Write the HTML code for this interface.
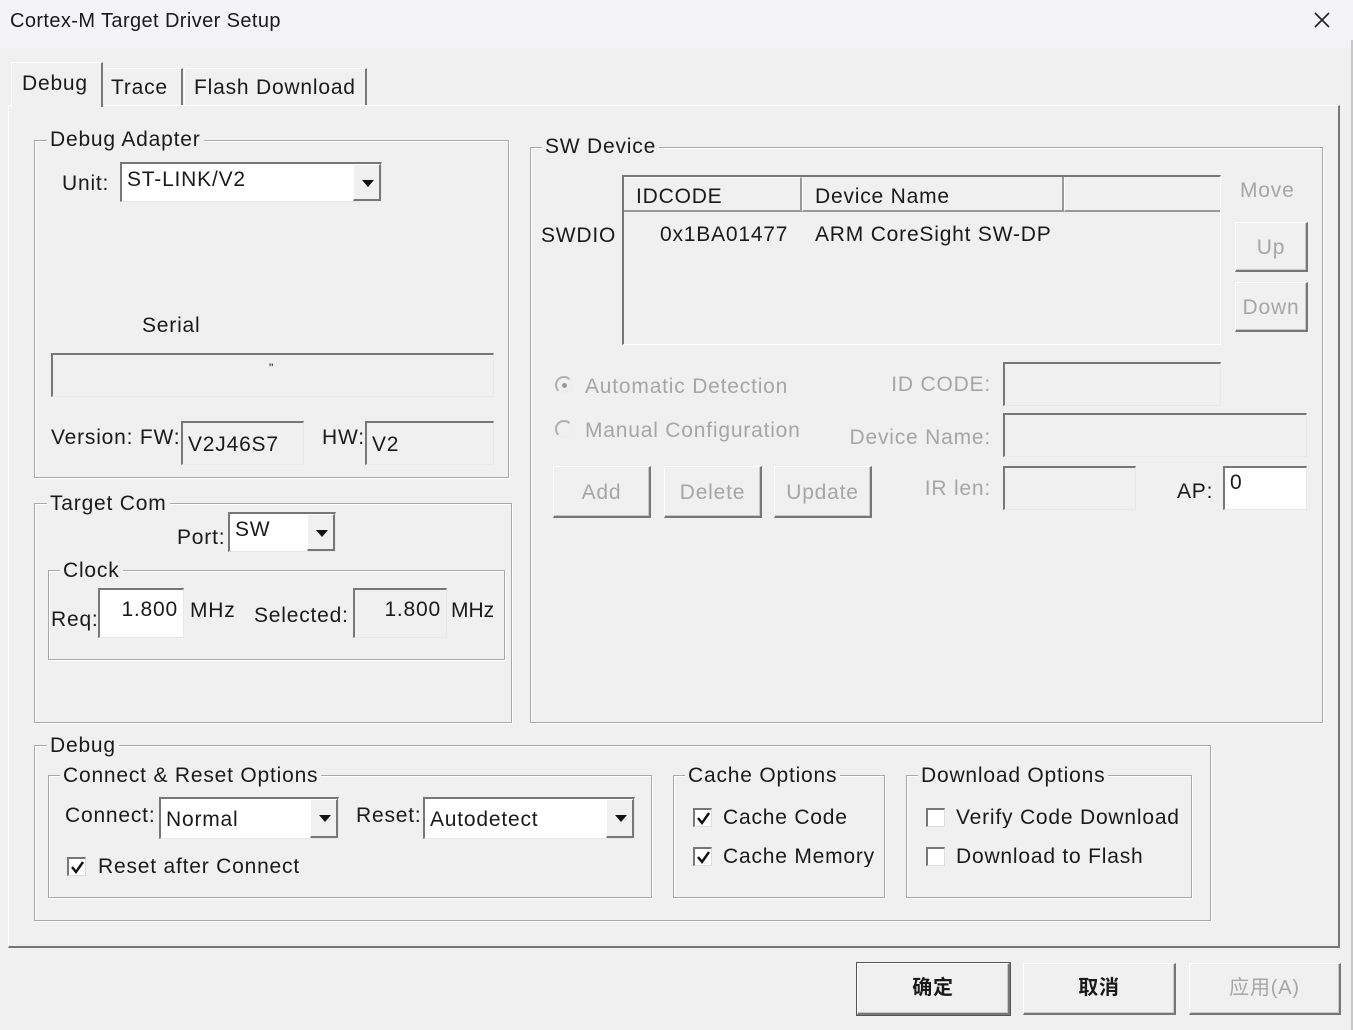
<!DOCTYPE html>
<html><head><meta charset="utf-8"><style>
*{box-sizing:border-box;margin:0;padding:0}
body{width:1353px;height:1030px;background:#f0f0f0;position:relative;overflow:hidden;font-family:"Liberation Sans","Noto Sans CJK SC",sans-serif;font-size:21px;color:#1a1a1a;letter-spacing:0.8px}
.a{position:absolute;white-space:nowrap;line-height:1}
.g{position:absolute;border:1px solid #a8a8a8;box-shadow:inset 1px 1px #fff,1px 1px #fff}
.gl{position:absolute;background:#f0f0f0;padding:0 3px;line-height:1;white-space:nowrap}
.e{position:absolute;background:#fff;border-top:2px solid #777;border-left:2px solid #777;border-bottom:1px solid #e8e8e8;border-right:1px solid #e8e8e8;padding:3px 5px;line-height:1.1;white-space:nowrap}
.ro{background:#f0f0f0}
.cb{position:absolute;background:#fff;border-top:2px solid #777;border-left:2px solid #777;border-bottom:1px solid #e8e8e8;border-right:1px solid #e8e8e8;padding:4px 5px;line-height:1.1}
.cb .ar{position:absolute;right:0;top:0;bottom:0;width:28px;background:#f0f0f0;border-left:1px solid #fff;border-top:1px solid #fff;border-right:2px solid #777;border-bottom:2px solid #777}
.cb .ar:after{content:"";position:absolute;left:8px;top:15px;border-left:6px solid transparent;border-right:6px solid transparent;border-top:7px solid #111}
.b{position:absolute;background:#f0f0f0;border-top:1px solid #fff;border-left:1px solid #fff;border-right:2px solid #777;border-bottom:2px solid #777;box-shadow:inset -1px -1px #c8c8c8;text-align:center;line-height:1}
.d{color:#a6a6a6}
.ck{position:absolute;width:19px;height:19px;background:#fff;border-top:2px solid #777;border-left:2px solid #777;border-bottom:1px solid #ddd;border-right:1px solid #ddd}
.ck svg{position:absolute;left:1px;top:1px}
.rd{position:absolute;width:18px;height:18px;border-radius:50%;border:2px solid #b0b0b0;border-right-color:#eee;border-bottom-color:#eee}
</style></head><body>
<div style="position:absolute;left:0;top:0;width:1353px;height:48px;background:#f4f4f8"></div>
<div class="a" style="left:10px;top:11px;font-size:20px;letter-spacing:0.4px">Cortex-M Target Driver Setup</div>
<svg style="position:absolute;left:1313px;top:11px" width="18" height="18"><path d="M2 2L16 16M16 2L2 16" stroke="#222" stroke-width="1.6"/></svg>
<div style="position:absolute;right:0;top:40px;width:2px;height:990px;background:#c8c8c8"></div>

<div style="position:absolute;left:8px;top:105px;width:1332px;height:843px;border-top:1px solid #fff;border-left:1px solid #fff;border-right:2px solid #777;border-bottom:2px solid #777"></div>
<div style="position:absolute;left:11px;top:62px;width:92px;height:45px;background:#f0f0f0;border-top:1px solid #fff;border-left:1px solid #fff;border-right:2px solid #777"></div>
<div class="a" style="left:22px;top:73px">Debug</div>
<div style="position:absolute;left:104px;top:68px;width:79px;height:37px;border-top:1px solid #fff;border-right:2px solid #777"></div>
<div class="a" style="left:111px;top:77px">Trace</div>
<div style="position:absolute;left:184px;top:68px;width:183px;height:37px;border-top:1px solid #fff;border-left:1px solid #fff;border-right:2px solid #777"></div>
<div class="a" style="left:194px;top:77px">Flash Download</div>

<div class="g" style="left:34px;top:140px;width:475px;height:338px"></div>
<div class="gl" style="left:47px;top:129px">Debug Adapter</div>
<div class="a" style="left:62px;top:173px">Unit:</div>
<div class="cb" style="left:120px;top:162px;width:262px;height:40px">ST-LINK/V2<div class="ar"></div></div>
<div class="a" style="left:142px;top:315px">Serial</div>
<div class="e ro" style="left:51px;top:353px;width:443px;height:44px"></div>
<div class="a" style="left:269px;top:362px;font-size:12px">"</div>
<div class="a" style="left:51px;top:427px">Version: FW:</div>
<div class="e ro" style="left:181px;top:421px;width:123px;height:44px;padding-top:10px">V2J46S7</div>
<div class="a" style="left:322px;top:427px">HW:</div>
<div class="e ro" style="left:365px;top:421px;width:129px;height:44px;padding-top:10px">V2</div>

<div class="g" style="left:34px;top:503px;width:478px;height:220px"></div>
<div class="gl" style="left:47px;top:493px">Target Com</div>
<div class="a" style="left:177px;top:527px">Port:</div>
<div class="cb" style="left:228px;top:512px;width:108px;height:40px">SW<div class="ar"></div></div>
<div class="g" style="left:48px;top:570px;width:457px;height:90px"></div>
<div class="gl" style="left:60px;top:560px">Clock</div>
<div class="a" style="left:51px;top:609px">Req:</div>
<div class="e" style="left:98px;top:588px;width:86px;height:50px;text-align:right;padding-top:8px">1.800</div>
<div class="a" style="left:190px;top:600px">MHz</div>
<div class="a" style="left:254px;top:605px">Selected:</div>
<div class="e ro" style="left:353px;top:588px;width:94px;height:50px;text-align:right;padding-top:8px">1.800</div>
<div class="a" style="left:451px;top:600px;letter-spacing:0">MHz</div>

<div class="g" style="left:530px;top:147px;width:793px;height:576px"></div>
<div class="gl" style="left:542px;top:136px">SW Device</div>
<div class="a" style="left:541px;top:225px">SWDIO</div>
<div style="position:absolute;left:622px;top:175px;width:599px;height:170px;border-top:2px solid #777;border-left:2px solid #777;border-bottom:1px solid #fff;border-right:1px solid #fff"></div>
<div style="position:absolute;left:624px;top:177px;width:178px;height:35px;border-right:2px solid #999;border-bottom:2px solid #999;border-top:1px solid #fff"></div>
<div style="position:absolute;left:802px;top:177px;width:262px;height:35px;border-right:2px solid #999;border-bottom:2px solid #999;border-left:1px solid #fff"></div>
<div style="position:absolute;left:1064px;top:177px;width:156px;height:35px;border-bottom:2px solid #999;border-left:1px solid #fff"></div>
<div class="a" style="left:636px;top:186px">IDCODE</div>
<div class="a" style="left:815px;top:186px">Device Name</div>
<div class="a" style="left:660px;top:224px">0x1BA01477</div>
<div class="a" style="left:815px;top:224px">ARM CoreSight SW-DP</div>
<div class="a d" style="left:1240px;top:180px">Move</div>
<div class="b d" style="left:1235px;top:222px;width:73px;height:50px;padding-top:14px">Up</div>
<div class="b d" style="left:1235px;top:282px;width:73px;height:50px;padding-top:14px">Down</div>
<div class="rd" style="left:555px;top:376px"></div><div style="position:absolute;left:562px;top:383px;width:5px;height:5px;border-radius:50%;background:#999"></div>
<div class="a d" style="left:585px;top:376px">Automatic Detection</div>
<div class="rd" style="left:555px;top:420px"></div>
<div class="a d" style="left:585px;top:420px">Manual Configuration</div>
<div class="a d" style="right:362px;top:374px">ID CODE:</div>
<div class="e ro" style="left:1003px;top:362px;width:218px;height:44px"></div>
<div class="a d" style="right:362px;top:427px">Device Name:</div>
<div class="e ro" style="left:1003px;top:413px;width:304px;height:44px"></div>
<div class="b d" style="left:553px;top:466px;width:98px;height:52px;padding-top:15px">Add</div>
<div class="b d" style="left:664px;top:466px;width:98px;height:52px;padding-top:15px">Delete</div>
<div class="b d" style="left:774px;top:466px;width:98px;height:52px;padding-top:15px">Update</div>
<div class="a d" style="right:362px;top:478px">IR len:</div>
<div class="e ro" style="left:1003px;top:466px;width:133px;height:44px"></div>
<div class="a" style="left:1177px;top:481px">AP:</div>
<div class="e" style="left:1223px;top:466px;width:84px;height:44px">0</div>

<div class="g" style="left:34px;top:745px;width:1177px;height:176px"></div>
<div class="gl" style="left:47px;top:735px">Debug</div>
<div class="g" style="left:48px;top:775px;width:604px;height:123px"></div>
<div class="gl" style="left:60px;top:765px">Connect &amp; Reset Options</div>
<div class="a" style="left:65px;top:805px">Connect:</div>
<div class="cb" style="left:159px;top:797px;width:180px;height:42px;padding-top:9px">Normal<div class="ar"></div></div>
<div class="a" style="left:356px;top:805px">Reset:</div>
<div class="cb" style="left:423px;top:797px;width:212px;height:42px;padding-top:9px">Autodetect<div class="ar"></div></div>
<div class="ck" style="left:67px;top:857px"><svg width="15" height="15"><path d="M2 7L6 12L13 2" stroke="#111" stroke-width="2.4" fill="none"/></svg></div>
<div class="a" style="left:98px;top:856px">Reset after Connect</div>
<div class="g" style="left:673px;top:775px;width:212px;height:123px"></div>
<div class="gl" style="left:685px;top:765px">Cache Options</div>
<div class="ck" style="left:693px;top:808px"><svg width="15" height="15"><path d="M2 7L6 12L13 2" stroke="#111" stroke-width="2.4" fill="none"/></svg></div>
<div class="a" style="left:723px;top:807px">Cache Code</div>
<div class="ck" style="left:693px;top:847px"><svg width="15" height="15"><path d="M2 7L6 12L13 2" stroke="#111" stroke-width="2.4" fill="none"/></svg></div>
<div class="a" style="left:723px;top:846px;width:156px;overflow:hidden">Cache Memory</div>
<div class="g" style="left:906px;top:775px;width:286px;height:123px"></div>
<div class="gl" style="left:918px;top:765px">Download Options</div>
<div class="ck" style="left:926px;top:808px"></div>
<div class="a" style="left:956px;top:807px;width:227px;overflow:hidden">Verify Code Download</div>
<div class="ck" style="left:926px;top:847px"></div>
<div class="a" style="left:956px;top:846px">Download to Flash</div>

<div class="b" style="left:857px;top:963px;width:153px;height:52px;padding-top:14px;outline:1px solid #555;font-weight:bold;font-size:20px">确定</div>
<div class="b" style="left:1023px;top:963px;width:153px;height:52px;padding-top:14px;font-weight:bold;font-size:20px">取消</div>
<div class="b d" style="left:1189px;top:963px;width:152px;height:52px;padding-top:14px;font-size:20px">应用(A)</div>
</body></html>
